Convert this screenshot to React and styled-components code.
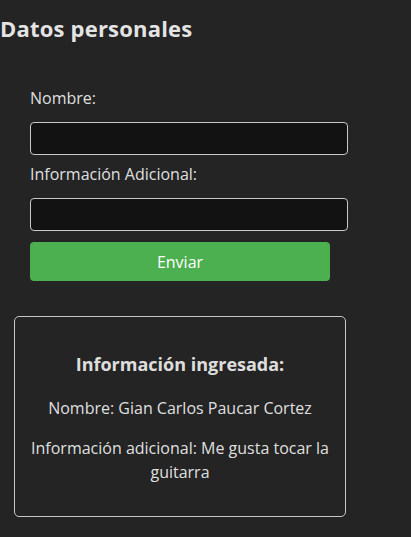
import React from "react";
import styled, { createGlobalStyle } from "styled-components";

const GlobalStyle = createGlobalStyle`
  html, body {
    margin: 0;
    padding: 0;
    background-color: #242424;
    color: rgba(255, 255, 255, 0.87);
    font-family: "Open Sans", "Noto Sans", sans-serif;
  }

  body {
    min-height: 537px;
  }
`;

export default function App() {
  return (
    <Page>
      <GlobalStyle />
      <Title>Datos personales</Title>

      <Form onSubmit={(e) => e.preventDefault()}>
        <Label htmlFor="nombre">Nombre:</Label>
        <Input id="nombre" type="text" />

        <Label htmlFor="info" spaced>
          Información Adicional:
        </Label>
        <Input id="info" type="text" />

        <Button type="submit">Enviar</Button>
      </Form>

      <Card>
        <CardTitle>Información ingresada:</CardTitle>
        <CardText>Nombre: Gian Carlos Paucar Cortez</CardText>
        <CardText spaced>
          Información adicional: Me gusta tocar la guitarra
        </CardText>
      </Card>
    </Page>
  );
}

const Page = styled.div`
  display: flex;
  flex-direction: column;
  padding-top: 14px;
`;

const Title = styled.h2`
  margin: 0;
  font-size: 22px;
  line-height: 28px;
  font-weight: 700;
  letter-spacing: 0.2px;
  color: rgba(255, 255, 255, 0.9);
`;

const Form = styled.form`
  display: flex;
  flex-direction: column;
  align-items: flex-start;
  padding: 0 30px;
  margin-top: 44px;
`;

const Label = styled.label`
  display: block;
  font-size: 16px;
  line-height: 24px;
  margin-top: ${(p) => (p.spaced ? "7px" : "0")};
  margin-bottom: 12px;
`;

const Input = styled.input`
  box-sizing: border-box;
  width: 318px;
  height: 33px;
  background-color: #121212;
  border: 1px solid #c8c8c8;
  border-radius: 4px;
  color: #fff;
  font-size: 16px;
  padding: 0 8px;
  outline: none;
`;

const Button = styled.button`
  box-sizing: border-box;
  width: 300px;
  height: 39px;
  margin-top: 11px;
  background-color: #4caf50;
  border: none;
  border-radius: 4px;
  color: #fff;
  font-family: "Open Sans", "Noto Sans", sans-serif;
  font-size: 16px;
  cursor: pointer;
`;

const Card = styled.div`
  box-sizing: border-box;
  width: 332px;
  height: 201px;
  margin: 35px 0 0 14px;
  padding: 35px 12px 0;
  border: 1px solid #c8c8c8;
  border-radius: 5px;
  text-align: center;
`;

const CardTitle = styled.h3`
  margin: 0;
  font-size: 18px;
  line-height: 24px;
  font-weight: 700;
`;

const CardText = styled.p`
  margin: ${(p) => (p.spaced ? "16px" : "20px")} 0 0;
  font-size: 16px;
  line-height: 24px;
`;
